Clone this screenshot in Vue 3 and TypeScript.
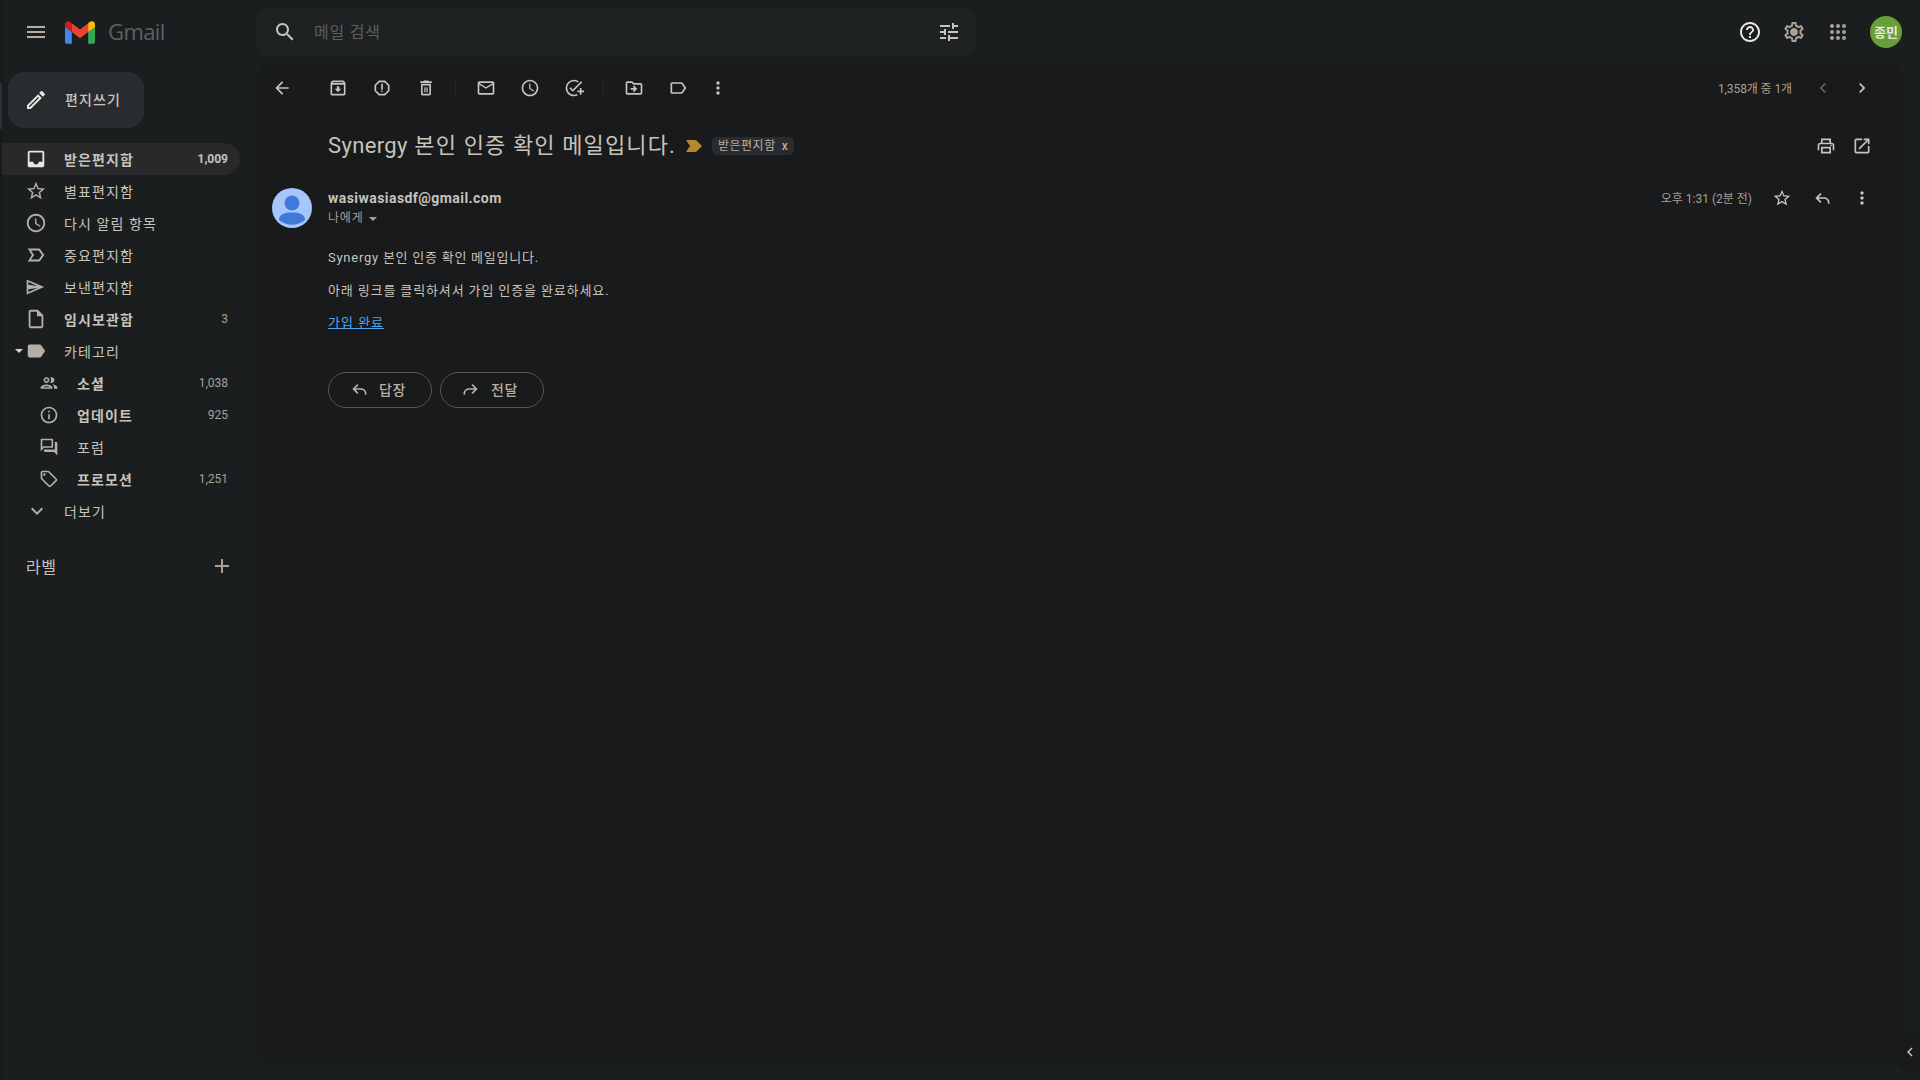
<script setup lang="ts">
import { h } from "vue";

const paths: Record<string, string> = {
  menu: "M3 18h18v-2H3v2zm0-5h18v-2H3v2zm0-7v2h18V6H3z",
  search: "M15.5 14h-.79l-.28-.27C15.41 12.59 16 11.11 16 9.5 16 5.91 13.09 3 9.5 3S3 5.91 3 9.5 5.91 16 9.5 16c1.61 0 3.09-.59 4.23-1.57l.27.28v.79l5 4.99L20.49 19l-4.99-5zm-6 0C7.01 14 5 11.99 5 9.5S7.01 5 9.5 5 14 7.01 14 9.5 11.99 14 9.5 14z",
  tune: "M3 17v2h6v-2H3zM3 5v2h10V5H3zm10 16v-2h8v-2h-8v-2h-2v6h2zM7 9v2H3v2h4v2h2V9H7zm14 4v-2H11v2h10zm-6-4h2V7h4V5h-4V3h-2v6z",
  help: "M11 18h2v-2h-2v2zm1-16C6.48 2 2 6.48 2 12s4.48 10 10 10 10-4.48 10-10S17.52 2 12 2zm0 18c-4.41 0-8-3.59-8-8s3.59-8 8-8 8 3.59 8 8-3.59 8-8 8zm0-14c-2.21 0-4 1.79-4 4h2c0-1.1.9-2 2-2s2 .9 2 2c0 2-3 1.75-3 5h2c0-2.25 3-2.5 3-5 0-2.21-1.79-4-4-4z",
  gear: "M19.43 12.98c.04-.32.07-.64.07-.98 0-.34-.03-.66-.07-.98l2.11-1.65c.19-.15.24-.42.12-.64l-2-3.46c-.09-.16-.26-.25-.44-.25-.06 0-.12.01-.17.03l-2.49 1c-.52-.4-1.08-.73-1.69-.98l-.38-2.65C14.46 2.18 14.25 2 14 2h-4c-.25 0-.46.18-.49.42l-.38 2.65c-.61.25-1.17.59-1.69.98l-2.49-1c-.06-.02-.12-.03-.18-.03-.17 0-.34.09-.43.25l-2 3.46c-.13.22-.07.49.12.64l2.11 1.65c-.04.32-.07.65-.07.98 0 .33.03.66.07.98l-2.11 1.65c-.19.15-.24.42-.12.64l2 3.46c.09.16.26.25.44.25.06 0 .12-.01.17-.03l2.49-1c.52.4 1.08.73 1.69.98l.38 2.65c.03.24.24.42.49.42h4c.25 0 .46-.18.49-.42l.38-2.65c.61-.25 1.17-.59 1.69-.98l2.49 1c.06.02.12.03.18.03.17 0 .34-.09.43-.25l2-3.46c.12-.22.07-.49-.12-.64l-2.11-1.65zm-1.98-1.71c.04.31.05.52.05.73 0 .21-.02.43-.05.73l-.14 1.13.89.7 1.08.84-.7 1.21-1.27-.51-1.04-.42-.9.68c-.43.32-.84.56-1.25.73l-1.06.43-.16 1.13-.2 1.35h-1.4l-.19-1.35-.16-1.13-1.06-.43c-.43-.18-.83-.41-1.23-.71l-.91-.7-1.06.43-1.27.51-.7-1.21 1.08-.84.89-.7-.14-1.13c-.03-.31-.05-.54-.05-.74s.02-.43.05-.73l.14-1.13-.89-.7-1.08-.84.7-1.21 1.27.51 1.04.42.9-.68c.43-.32.84-.56 1.25-.73l1.06-.43.16-1.13.2-1.35h1.39l.19 1.35.16 1.13 1.06.43c.43.18.83.41 1.23.71l.91.7 1.06-.43 1.27-.51.7 1.21-1.07.85-.89.7.14 1.13zM12 8c-2.21 0-4 1.79-4 4s1.79 4 4 4 4-1.79 4-4-1.79-4-4-4z",
  apps: "M6 4a2 2 0 1 0 0 4 2 2 0 0 0 0-4zm6 0a2 2 0 1 0 0 4 2 2 0 0 0 0-4zm6 0a2 2 0 1 0 0 4 2 2 0 0 0 0-4zM6 10a2 2 0 1 0 0 4 2 2 0 0 0 0-4zm6 0a2 2 0 1 0 0 4 2 2 0 0 0 0-4zm6 0a2 2 0 1 0 0 4 2 2 0 0 0 0-4zM6 16a2 2 0 1 0 0 4 2 2 0 0 0 0-4zm6 0a2 2 0 1 0 0 4 2 2 0 0 0 0-4zm6 0a2 2 0 1 0 0 4 2 2 0 0 0 0-4z",
  edit: "M3 17.25V21h3.75L17.81 9.94l-3.75-3.75L3 17.25zM5.92 19H5v-.92l9.06-9.06.92.92L5.92 19zM20.71 5.63l-2.34-2.34c-.2-.2-.45-.29-.71-.29s-.51.1-.7.29l-1.83 1.83 3.75 3.75 1.83-1.83c.39-.39.39-1.02 0-1.41z",
  inbox: "M19 3H4.99c-1.11 0-1.98.89-1.98 2L3 19c0 1.1.88 2 1.99 2H19c1.1 0 2-.9 2-2V5c0-1.11-.9-2-2-2zm0 12h-4c0 1.66-1.35 3-3 3s-3-1.34-3-3H4.99V5H19v10z",
  star: "M22 9.24l-7.19-.62L12 2 9.19 8.63 2 9.24l5.46 4.73L5.82 21 12 17.27 18.18 21l-1.63-7.03L22 9.24zM12 15.4l-3.76 2.27 1-4.28-3.32-2.88 4.38-.38L12 6.1l1.71 4.04 4.38.38-3.32 2.88 1 4.28L12 15.4z",
  clock: "M11.99 2C6.47 2 2 6.48 2 12s4.47 10 9.99 10C17.52 22 22 17.52 22 12S17.52 2 11.99 2zM12 20c-4.42 0-8-3.58-8-8s3.58-8 8-8 8 3.58 8 8-3.58 8-8 8zm.5-13H11v6l5.25 3.15.75-1.23-4.5-2.67z",
  important: "M15 19H3l4.5-7L3 5h12c.65 0 1.26.31 1.63.84L21 12l-4.37 6.16c-.37.52-.98.84-1.63.84zm-8.5-2H15l3.5-5L15 7H6.5l3.5 5-3.5 5z",
  send: "M2 3v18l21-9zM4 6.1l11 4.7L4 9.3zM15 13.2L4 14.7v3.2z",
  draft: "M14 2H6c-1.1 0-1.99.9-1.99 2L4 20c0 1.1.89 2 1.99 2H18c1.1 0 2-.9 2-2V8l-6-6zM6 20V4h7v5h5v11H6z",
  labelFill: "M17.63 5.84C17.27 5.33 16.67 5 16 5L5 5.01C3.9 5.01 3 5.9 3 7v10c0 1.1.9 1.99 2 1.99L16 19c.67 0 1.27-.33 1.63-.84L22 12l-4.37-6.16z",
  label: "M17.63 5.84C17.27 5.33 16.67 5 16 5L5 5.01C3.9 5.01 3 5.9 3 7v10c0 1.1.9 1.99 2 1.99L16 19c.67 0 1.27-.33 1.63-.84L22 12l-4.37-6.16zM16 17H5V7h11l3.55 5L16 17z",
  people: "M9 13.75c-2.34 0-7 1.17-7 3.5V19h14v-1.75c0-2.33-4.66-3.5-7-3.5zM4.34 17c.84-.58 2.87-1.25 4.66-1.25s3.82.67 4.66 1.25H4.34zM9 12c1.93 0 3.5-1.57 3.5-3.5S10.93 5 9 5 5.5 6.57 5.5 8.5 7.07 12 9 12zm0-5c.83 0 1.5.67 1.5 1.5S9.83 10 9 10s-1.5-.67-1.5-1.5S8.17 7 9 7zm7.04 6.81c1.16.84 1.96 1.96 1.96 3.44V19h4v-1.75c0-2.02-3.5-3.17-5.96-3.44zM15 12c1.93 0 3.5-1.57 3.5-3.5S16.93 5 15 5c-.54 0-1.04.13-1.5.35.63.89 1 1.98 1 3.15s-.37 2.26-1 3.15c.46.22.96.35 1.5.35z",
  info: "M11 7h2v2h-2zm0 4h2v6h-2zm1-9C6.48 2 2 6.48 2 12s4.48 10 10 10 10-4.48 10-10S17.52 2 12 2zm0 18c-4.41 0-8-3.59-8-8s3.59-8 8-8 8 3.59 8 8-3.59 8-8 8z",
  forum: "M15 4v7H5.17L4 12.17V4h11m1-2H3c-.55 0-1 .45-1 1v14l4-4h10c.55 0 1-.45 1-1V3c0-.55-.45-1-1-1zm5 4h-2v9H6v2c0 .55.45 1 1 1h11l4 4V7c0-.55-.45-1-1-1z",
  tag: "M21.41 11.58l-9-9C12.05 2.22 11.55 2 11 2H4c-1.1 0-2 .9-2 2v7c0 .55.22 1.05.59 1.42l9 9c.36.36.86.58 1.41.58s1.05-.22 1.41-.59l7-7c.37-.36.59-.86.59-1.41s-.23-1.06-.59-1.42zM13 20.01L4 11V4h7v-.01l9 9-7 7.02zM6.5 5a1.5 1.5 0 1 0 0 3 1.5 1.5 0 0 0 0-3z",
  expand: "M16.59 8.59L12 13.17 7.41 8.59 6 10l6 6 6-6z",
  add: "M19 13h-6v6h-2v-6H5v-2h6V5h2v6h6v2z",
  back: "M20 11H7.83l5.59-5.59L12 4l-8 8 8 8 1.41-1.41L7.83 13H20v-2z",
  archive: "M20.54 5.23l-1.39-1.68C18.88 3.21 18.47 3 18 3H6c-.47 0-.88.21-1.16.55L3.46 5.23C3.17 5.57 3 6.02 3 6.5V19c0 1.1.9 2 2 2h14c1.1 0 2-.9 2-2V6.5c0-.48-.17-.93-.46-1.27zM6.24 5h11.52l.81.97H5.44l.8-.97zM5 19V8h14v11H5zm8.45-9h-2.9v3H8l4 4 4-4h-2.55z",
  report: "M15.73 3H8.27L3 8.27v7.46L8.27 21h7.46L21 15.73V8.27L15.73 3zM19 14.9L14.9 19H9.1L5 14.9V9.1L9.1 5h5.8L19 9.1v5.8zM11 7h2v7h-2zM12 15a1 1 0 1 0 0 2 1 1 0 0 0 0-2z",
  trash: "M6 19c0 1.1.9 2 2 2h8c1.1 0 2-.9 2-2V7H6v12zM8 9h8v10H8V9zm7.5-5l-1-1h-5l-1 1H5v2h14V4h-3.5zM10 11h1.5v6H10zM12.5 11H14v6h-1.5z",
  mail: "M20 4H4c-1.1 0-1.99.9-1.99 2L2 18c0 1.1.9 2 2 2h16c1.1 0 2-.9 2-2V6c0-1.1-.9-2-2-2zm0 14H4V8l8 5 8-5v10zm-8-7L4 6h16l-8 5z",
  task: "M22 5.18L10.59 16.6l-4.24-4.24 1.41-1.41 2.83 2.83 10-10L22 5.18zM12 20c-4.41 0-8-3.59-8-8s3.59-8 8-8c1.57 0 3.04.46 4.28 1.25l1.45-1.45A9.9 9.9 0 0 0 12 2C6.48 2 2 6.48 2 12s4.48 10 10 10c1.73 0 3.36-.44 4.78-1.22l-1.5-1.5c-1 .46-2.11.72-3.28.72zm7-5h-3v2h3v3h2v-3h3v-2h-3v-3h-2v3z",
  move: "M20 6h-8l-2-2H4c-1.1 0-1.99.9-1.99 2L2 18c0 1.1.9 2 2 2h16c1.1 0 2-.9 2-2V8c0-1.1-.9-2-2-2zm0 12H4V6h5.17l2 2H20v10zm-8.01-9l-1.41 1.41L12.16 12H8v2h4.16l-1.59 1.59L11.99 17 16 13.01 11.99 9z",
  more: "M12 8c1.1 0 2-.9 2-2s-.9-2-2-2-2 .9-2 2 .9 2 2 2zm0 2c-1.1 0-2 .9-2 2s.9 2 2 2 2-.9 2-2-.9-2-2-2zm0 6c-1.1 0-2 .9-2 2s.9 2 2 2 2-.9 2-2-.9-2-2-2z",
  prev: "M15.41 7.41L14 6l-6 6 6 6 1.41-1.41L10.83 12z",
  next: "M10 6L8.59 7.41 13.17 12l-4.58 4.59L10 18l6-6z",
  print: "M19 8h-1V3H6v5H5c-1.66 0-3 1.34-3 3v6h4v4h12v-4h4v-6c0-1.66-1.34-3-3-3zM8 5h8v3H8V5zm8 14H8v-4h8v4zm2-2v-4H6v4H4v-6c0-.55.45-1 1-1h14c.55 0 1 .45 1 1v6h-2zM18 10.5a1 1 0 1 0 0 2 1 1 0 0 0 0-2z",
  open: "M19 19H5V5h7V3H5c-1.11 0-2 .9-2 2v14c0 1.1.89 2 2 2h14c1.1 0 2-.9 2-2v-7h-2v7zM14 3v2h3.59l-9.83 9.83 1.41 1.41L19 6.41V10h2V3h-7z",
  reply: "M21 17.5V19h-2v-1.5c0-2.5-2-4.5-4.5-4.5H7.83l3.58 3.59L10 18l-6-6 6-6 1.41 1.41L7.83 11h6.67c3.59 0 6.5 2.91 6.5 6.5z",
  forward: "M3 17.5V19h2v-1.5C5 15 7 13 9.5 13h6.67l-3.58 3.59L14 18l6-6-6-6-1.41 1.41L16.17 11H9.5C5.91 11 3 13.91 3 17.5z",
};

const Icon = (props: { n: string; s?: number }) =>
  h("svg", { class: "ic", width: props.s ?? 20, height: props.s ?? 20, viewBox: "0 0 24 24" }, [
    h("path", { d: paths[props.n], fill: "currentColor", "fill-rule": "evenodd" }),
  ]);
Icon.props = ["n", "s"];

interface NavItem {
  icon: string;
  text: string;
  count?: string;
  bold?: boolean;
  sub?: boolean;
  active?: boolean;
  caret?: boolean;
  size?: number;
}

const nav: NavItem[] = [
  { icon: "inbox", text: "받은편지함", count: "1,009", bold: true, active: true, size: 22 },
  { icon: "star", text: "별표편지함", size: 22 },
  { icon: "clock", text: "다시 알림 항목", size: 22 },
  { icon: "important", text: "중요편지함", size: 22 },
  { icon: "send", text: "보낸편지함", size: 20 },
  { icon: "draft", text: "임시보관함", count: "3", bold: true, size: 22 },
  { icon: "labelFill", text: "카테고리", caret: true, size: 22 },
  { icon: "people", text: "소셜", count: "1,038", bold: true, sub: true },
  { icon: "info", text: "업데이트", count: "925", bold: true, sub: true },
  { icon: "forum", text: "포럼", sub: true },
  { icon: "tag", text: "프로모션", count: "1,251", bold: true, sub: true },
  { icon: "expand", text: "더보기", size: 24 },
];

const tools = [
  ["archive", "report", "trash"],
  ["mail", "clock", "task"],
  ["move", "label", "more"],
];
</script>

<template>
  <div class="app">
    <div class="edge"><div class="thumb"></div></div>

    <aside class="side">
      <div class="brand">
        <span class="burger"><Icon n="menu" :s="24" /></span>
        <svg class="logo" width="30" height="23" viewBox="0 0 256 193">
          <path fill="#4285F4" d="M58.182 192.05V93.14L27.507 65.077 0 49.504v125.091c0 9.658 7.825 17.455 17.455 17.455h40.727Z" />
          <path fill="#34A853" d="M197.818 192.05h40.727c9.659 0 17.455-7.826 17.455-17.455V49.505l-31.156 17.837-27.026 25.798v98.91Z" />
          <path fill="#EA4335" d="M58.182 93.14l-4.174-38.647 4.174-36.989L128 69.868l69.818-52.364 4.67 34.992-4.67 40.644L128 145.504z" />
          <path fill="#FBBC04" d="M197.818 17.504V93.14L256 49.504V26.231c0-21.585-24.64-33.89-41.89-20.945l-16.292 12.218Z" />
          <path fill="#C5221F" d="M0 49.504l26.759 20.07L58.182 93.14V17.504L41.89 5.286C24.61-7.66 0 4.646 0 26.23v23.273Z" />
        </svg>
        <span class="wordmark">Gmail</span>
      </div>

      <button class="compose">
        <Icon n="edit" :s="24" />
        <span>편지쓰기</span>
      </button>

      <nav class="nav">
        <div
          v-for="item in nav"
          :key="item.text"
          class="row"
          :class="{ active: item.active, bold: item.bold, sub: item.sub }"
        >
          <span v-if="item.caret" class="caret"></span>
          <span class="row-icon"><Icon :n="item.icon" :s="item.size" /></span>
          <span class="row-text">{{ item.text }}</span>
          <span v-if="item.count" class="count">{{ item.count }}</span>
        </div>
      </nav>

      <div class="labels">
        <span>라벨</span>
        <Icon n="add" :s="24" />
      </div>
    </aside>

    <div class="content">
      <header class="top">
        <div class="searchbox">
          <Icon n="search" :s="24" />
          <span class="placeholder">메일 검색</span>
          <span class="tune"><Icon n="tune" :s="24" /></span>
        </div>
        <div class="top-right">
          <span class="top-btn white"><Icon n="help" :s="24" /></span>
          <span class="top-btn"><Icon n="gear" :s="24" /></span>
          <span class="top-btn"><Icon n="apps" :s="24" /></span>
          <span class="avatar-small">종민</span>
        </div>
      </header>

      <main class="panel">
        <div class="toolbar">
          <span class="tool back"><Icon n="back" /></span>
          <template v-for="(group, i) in tools" :key="i">
            <span v-if="i > 0" class="sep"></span>
            <span v-for="t in group" :key="t" class="tool" :class="{ narrow: t === 'more' }"><Icon :n="t" /></span>
          </template>
          <span class="pager">1,358개 중 1개</span>
          <span class="page-btn dim"><Icon n="prev" /></span>
          <span class="page-btn"><Icon n="next" /></span>
        </div>

        <div class="subject-row">
          <h1 class="subject"><span class="latin">Synergy</span> 본인 인증 확인 메일입니다.</h1>
          <svg class="marker" width="18" height="14" viewBox="0 0 18 14">
            <path fill="#b5882a" d="M1 1h10l6 6-6 6H1l4-6z" />
          </svg>
          <span class="chip">받은편지함<i>x</i></span>
          <span class="subject-actions">
            <span class="sub-btn"><Icon n="print" /></span>
            <span class="sub-btn"><Icon n="open" /></span>
          </span>
        </div>

        <div class="message">
          <svg class="photo" width="40" height="40" viewBox="0 0 40 40">
            <circle cx="20" cy="20" r="20" fill="#a4c6fb" />
            <circle cx="20" cy="15" r="7.5" fill="#4079d8" />
            <path fill="#4079d8" d="M7 32c0-6 6-7.500 13-7.500S33 26 33 32a20 20 0 0 1-26 0z" />
          </svg>
          <div class="msg-main">
            <div class="msg-head">
              <div>
                <div class="sender">wasiwasiasdf@gmail.com</div>
                <div class="tome">나에게 <span class="tome-caret"></span></div>
              </div>
              <div class="msg-meta">
                <span class="time">오후 1:31 (2분 전)</span>
                <span class="meta-btn"><Icon n="star" /></span>
                <span class="meta-btn"><Icon n="reply" /></span>
                <span class="meta-btn"><Icon n="more" /></span>
              </div>
            </div>
            <div class="msg-body">
              <p class="l1">Synergy 본인 인증 확인 메일입니다.</p>
              <p class="l2">아래 링크를 클릭하셔서 가입 인증을 완료하세요.</p>
              <p class="l3"><a href="#" class="link">가입 완료</a></p>
            </div>
            <div class="actions">
              <button class="pill"><Icon n="reply" /><span>답장</span></button>
              <button class="pill"><Icon n="forward" /><span>전달</span></button>
            </div>
          </div>
        </div>
      </main>
    </div>

    <span class="side-toggle"><Icon n="prev" :s="18" /></span>
  </div>
</template>

<style>
html, body {
  margin: 0;
  background: #1b1e1f;
}
</style>

<style scoped>
.app {
  display: flex;
  height: 100vh;
  position: relative;
  overflow: hidden;
  background: #1b1e1f;
  color: #c8c3bc;
  font-family: Roboto, "Noto Sans CJK KR", sans-serif;
  font-size: 14px;
}
.ic { display: block; flex: none; }

.edge {
  width: 2px;
  flex: none;
  background: #181a1b;
  padding-top: 83px;
}
.thumb { height: 46px; background: #2e3234; }

.side { width: 254px; flex: none; }
.brand {
  height: 64px;
  display: flex;
  align-items: center;
}
.burger { margin-left: 22px; width: 41px; color: #b5afa6; }
.logo { margin-right: 13px; }
.wordmark {
  font-family: "Open Sans", Roboto, sans-serif;
  font-size: 22px;
  color: #5c6166;
  letter-spacing: -0.6px;
  margin-top: -2px;
}
.compose {
  margin: 8px 0 15px 6px;
  width: 136px;
  height: 56px;
  border: 0;
  border-radius: 16px;
  background: #292c2e;
  color: #c8c3bc;
  display: flex;
  align-items: center;
  gap: 17px;
  padding: 0 0 2px 16px;
  box-sizing: border-box;
  font: 500 14px Roboto, "Noto Sans CJK KR", sans-serif;
  letter-spacing: 1.1px;
}
.compose .ic { color: #e8e6e3; margin-top: 2px; }

.row {
  height: 32px;
  width: 238px;
  box-sizing: border-box;
  display: flex;
  align-items: center;
  padding: 0 12px 0 23px;
  border-radius: 0 16px 16px 0;
  position: relative;
}
.row.active { background: #27292b; }
.row.active .row-icon { color: #e8e6e3; }
.row.sub { padding-left: 37px; }
.row-icon {
  width: 39px;
  flex: none;
  color: #b5afa6;
}
.row-icon .ic { margin-left: 0; }
.row.sub .row-icon { width: 38px; }
.row-text { flex: 1; letter-spacing: 1.1px; }
.row.bold .row-text { font-weight: 700; }
.count { font-size: 12px; color: #a8a095; }
.row.active .count { font-weight: 700; color: #c8c3bc; }
.caret {
  position: absolute;
  left: 13px;
  top: 14px;
  border: 4px solid transparent;
  border-top: 4px solid #d8d4cf;
  border-bottom: 0;
}

.labels {
  margin: 27px 0 0 24px;
  width: 208px;
  display: flex;
  align-items: center;
  justify-content: space-between;
  font-size: 16px;
  letter-spacing: 0.5px;
  color: #c8c3bc;
}
.labels .ic { color: #a8a095; }

.content {
  flex: 1;
  min-width: 0;
  display: flex;
  flex-direction: column;
  padding: 0 16px 16px 0;
}
.top {
  height: 64px;
  flex: none;
  display: flex;
  align-items: flex-start;
}
.searchbox {
  margin-top: 8px;
  width: 720px;
  height: 48px;
  box-sizing: border-box;
  background: #1f2223;
  border-radius: 8px;
  display: flex;
  align-items: center;
  padding: 0 6px 0 17px;
  color: #c8c3bc;
}
.placeholder {
  margin: 0 0 2px 17px;
  flex: 1;
  font-size: 16px;
  letter-spacing: 0.8px;
  color: #5d5f60;
}
.tune { margin-right: 9px; color: #c8c3bc; }
.top-right {
  margin-left: auto;
  height: 64px;
  display: flex;
  align-items: center;
  padding-right: 2px;
  color: #a8a095;
}
.top-btn { width: 44px; display: flex; justify-content: center; }
.top-btn.white { color: #e8e6e3; }
.avatar-small {
  margin-left: 10px;
  width: 32px;
  height: 32px;
  border-radius: 50%;
  background: #689f38;
  color: #e8e6e3;
  font-size: 13px;
  font-weight: 700;
  padding-bottom: 1px;
  box-sizing: border-box;
  display: flex;
  align-items: center;
  justify-content: center;
}

.panel {
  flex: 1;
  background: #181a1b;
  border-radius: 16px;
}
.toolbar {
  height: 48px;
  display: flex;
  align-items: center;
  padding: 0 23px 0 6px;
  color: #c8c3bc;
}
.tool { width: 44px; display: flex; justify-content: center; }
.tool.back { width: 40px; margin-right: 14px; }
.tool.narrow { margin-left: -4px; }
.sep {
  width: 1px;
  height: 20px;
  background: #25282a;
  margin: 0 8px 0 7px;
}
.pager {
  margin: 0 11px 2px auto;
  font-size: 12px;
  color: #a8a095;
  letter-spacing: -0.1px;
}
.page-btn { width: 39px; display: flex; justify-content: center; }
.page-btn.dim { color: #5f5f5c; }

.subject-row {
  height: 64px;
  box-sizing: border-box;
  display: flex;
  align-items: center;
  padding: 3px 24px 0 72px;
}
.subject {
  margin: -6px 0 0;
  font-size: 22px;
  font-weight: 400;
  letter-spacing: 1.12px;
  color: #c8c3bc;
}
.latin { letter-spacing: 0.35px; }
.marker { margin-left: 9px; }
.chip {
  margin-left: 9px;
  height: 18px;
  padding: 0 6px;
  background: #292c2e;
  border-radius: 5px;
  font-size: 12px;
  line-height: 18px;
  letter-spacing: 0.5px;
  color: #b5afa6;
}
.chip i { font-style: normal; margin-left: 6px; font-size: 12px; font-weight: 500; }
.subject-actions { margin-left: auto; display: flex; }
.sub-btn { width: 36px; display: flex; justify-content: center; }

.message {
  margin-top: 12px;
  display: flex;
  gap: 16px;
  padding: 0 22px 0 16px;
}
.photo { flex: none; }
.msg-main { flex: 1; min-width: 0; }
.msg-head { display: flex; justify-content: space-between; align-items: flex-start; }
.sender {
  height: 20px;
  line-height: 20px;
  font-weight: 700;
  letter-spacing: 0.45px;
  color: #c8c3bc;
}
.tome {
  height: 18px;
  line-height: 20px;
  font-size: 12px;
  letter-spacing: 0.8px;
  color: #a8a095;
}
.tome-caret {
  display: inline-block;
  margin-left: 2px;
  vertical-align: middle;
  border: 4px solid transparent;
  border-top: 4px solid #a8a095;
  border-bottom: 0;
}
.msg-meta { display: flex; align-items: center; height: 20px; }
.time { font-size: 12px; color: #a8a095; margin: 0 10px 2px 0; }
.meta-btn { width: 40px; display: flex; justify-content: center; color: #c8c3bc; }

.msg-body { margin-top: 22px; font-size: 13px; line-height: 20px; letter-spacing: 0.75px; }
.msg-body p { margin: 0; }
.l2 { margin-top: 13px !important; letter-spacing: 0.87px; }
.l3 { margin-top: 12px !important; }
.link { color: #4ea6f0; text-decoration: underline; letter-spacing: 1px; }

.actions { margin-top: 39px; display: flex; gap: 8px; }
.pill {
  width: 104px;
  height: 36px;
  background: transparent;
  border: 1px solid #5f564b;
  border-radius: 18px;
  color: #b5afa6;
  display: flex;
  align-items: center;
  justify-content: center;
  gap: 10px;
  padding: 0 5px 2px 0;
  box-sizing: border-box;
  font: 500 14px Roboto, "Noto Sans CJK KR", sans-serif;
  letter-spacing: 0.6px;
}

.side-toggle {
  position: absolute;
  left: 1896px;
  top: 1032px;
  width: 40px;
  height: 40px;
  border-radius: 50%;
  background: #181a1b;
  box-shadow: 0 0 2px rgba(0, 0, 0, 0.4);
  display: flex;
  align-items: center;
  padding-left: 5px;
  box-sizing: border-box;
}
</style>
